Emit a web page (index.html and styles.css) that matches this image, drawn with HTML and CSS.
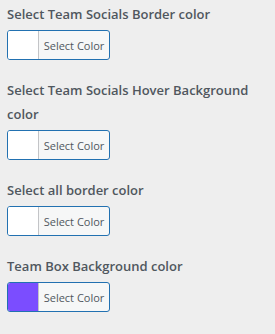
FILE: index.html
```html
<!DOCTYPE html>
<html lang="en">
<head>
  <meta charset="UTF-8">
  <title>Team colors</title>
  <link rel="stylesheet" href="styles.css">
</head>
<body>
  <div class="field">
    <label class="field-label">Select Team Socials Border color</label>
    <button class="color-button" type="button">
      <span class="swatch"></span>
      <span class="button-text">Select Color</span>
    </button>
  </div>
  <div class="field">
    <label class="field-label">Select Team Socials Hover Background color</label>
    <button class="color-button" type="button">
      <span class="swatch"></span>
      <span class="button-text">Select Color</span>
    </button>
  </div>
  <div class="field">
    <label class="field-label">Select all border color</label>
    <button class="color-button" type="button">
      <span class="swatch"></span>
      <span class="button-text">Select Color</span>
    </button>
  </div>
  <div class="field">
    <label class="field-label">Team Box Background color</label>
    <button class="color-button" type="button">
      <span class="swatch swatch-purple"></span>
      <span class="button-text">Select Color</span>
    </button>
  </div>
</body>
</html>
```

FILE: styles.css
```css
body {
  margin: 0;
  padding: 2px 7px;
  background-color: #eeeeee;
  font-family: "Open Sans", "Noto Sans", sans-serif;
  color: #50575e;
}
.field { margin-bottom: 18px; }
.field-label {
  display: block;
  font-size: 13px;
  font-weight: 600;
  line-height: 24px;
  margin-bottom: 4px;
}
.color-button {
  display: flex;
  width: 103px;
  height: 30px;
  padding: 0;
  border: 1px solid #2271b1;
  border-radius: 3px;
  background-color: #f6f7f7;
  overflow: hidden;
  cursor: pointer;
}
.swatch {
  width: 30px;
  height: 100%;
  background-color: #ffffff;
  border-right: 1px solid #c3c4c7;
}
.swatch-purple { background-color: #7b4dff; }
.button-text {
  flex: 1;
  align-self: center;
  font-family: "Open Sans", "Noto Sans", sans-serif;
  font-size: 11px;
  color: #50575e;
  text-align: center;
}
```
